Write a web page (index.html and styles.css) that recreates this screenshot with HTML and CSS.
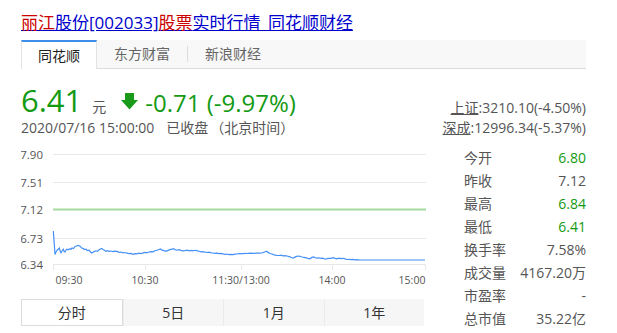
FILE: index.html
```html
<!DOCTYPE html>
<html>

<head>
  <title>丽江股份[002033]股票实时行情_同花顺财经</title>
  <link rel="stylesheet" href="styles.css">
</head>

<body>
  <div class="page">
    <h3 class="title">
      <a href="#"><em>丽江</em>股份[002033]<em>股票</em>实时行情_同花顺财经</a>
    </h3>

    <div class="tabs">
      <span class="tab active">同花顺</span>
      <span class="tab">东方财富</span>
      <span class="tab sep">新浪财经</span>
    </div>

    <div class="quote">
      <div class="price-block">
        <div class="price-line">
          <span class="price">6.41</span>
          <span class="unit">元</span>
          <svg class="arrow" width="17" height="17" viewBox="0 0 17 17">
            <path d="M4 0H13V7H17L8.5 16.5L0 7H4Z" fill="#1a9a1a" />
          </svg>
          <span class="change">-0.71 (-9.97%)</span>
        </div>
        <div class="time">2020/07/16 15:00:00<span class="status">已收盘</span>（北京时间）</div>
      </div>
      <div class="index">
        <div><a href="#">上证</a>:3210.10(-4.50%)</div>
        <div><a href="#">深成</a>:12996.34(-5.37%)</div>
      </div>
    </div>

    <div class="main">
      <div class="chart-wrap">
        <svg class="chart" width="410" height="150" viewBox="21 140 410 150">
          <g class="grid">
            <line x1="53" y1="152.5" x2="426" y2="152.5" />
            <line x1="53" y1="180.5" x2="426" y2="180.5" />
            <line x1="53" y1="236.5" x2="426" y2="236.5" />
            <line x1="53" y1="262.5" x2="426" y2="262.5" />
            <line x1="53.5" y1="262" x2="53.5" y2="268" />
            <line x1="145.5" y1="262" x2="145.5" y2="268" />
            <line x1="241.5" y1="262" x2="241.5" y2="268" />
            <line x1="332.5" y1="262" x2="332.5" y2="268" />
            <line x1="425.5" y1="262" x2="425.5" y2="268" />
          </g>
          <line class="base" x1="53" y1="207.5" x2="426" y2="207.5" />
          <g class="ylabels">
            <text x="43" y="156.5">7.90</text>
            <text x="43" y="184.5">7.51</text>
            <text x="43" y="211.5">7.12</text>
            <text x="43" y="240.5">6.73</text>
            <text x="43" y="266.5">6.34</text>
          </g>
          <g class="xlabels">
            <text x="69" y="282">09:30</text>
            <text x="145" y="282">10:30</text>
            <text x="241" y="282">11:30/13:00</text>
            <text x="332" y="282">14:00</text>
            <text x="412" y="282">15:00</text>
          </g>
          <path class="line" d="M53.3,229 L54.5,245 L55,252.5 L56,250 L57.3,248 L58.5,247 L59.3,246 L60.2,249 L61,250.7 L62,249 L63.3,247.3 L64.2,249.5 L65,250 L66,248 L66.7,247.3 L68,247.8 L69.5,246.8 L71,247.2 L72,246 L73.5,246.5 L75,244.5 L76.5,244 L78.3,243.5 L80,244.2 L81.7,246 L83,246.4 L84.5,247.5 L86,247.2 L87.5,248.6 L89,248.2 L90.5,250 L91.7,251 L93,250.2 L94.5,249.4 L96,248.8 L97.5,249.3 L99,247.8 L100.5,247 L101.7,246.5 L103,247.4 L104.5,248.3 L106,249.3 L107.5,248.6 L109,249.4 L111,249 L113,249.6 L115,249.1 L117,249.4 L119,250.4 L121,250 L123,250.8 L125,250.5 L127,251.2 L129,251.6 L131,251.4 L133,252.3 L135,251.6 L137,251.9 L139,251.2 L141,251.7 L143,250.9 L145,250.4 L147,250.8 L149,250 L151,249.6 L153,249.9 L155,248.8 L157,248.2 L159,247.5 L160.5,247 L162,248.2 L164,248.7 L166,249.3 L168,248.4 L170,247.6 L172,247.2 L173.5,246.6 L175,247.6 L177,248.2 L179,247.6 L181,248.4 L183,248.9 L185,248.6 L187,248.2 L189,248.8 L191,248.4 L193,248.9 L195,248.3 L197,248.6 L199,249.2 L201,249.8 L203,249.6 L205,250.2 L207,250.5 L209,250.2 L211,250.9 L213,251 L215,251.4 L217,251.2 L219,251.7 L221,251.4 L223,251.9 L225,252.3 L227,252 L229,252.6 L231,252.4 L233,252.7 L235,252.2 L237,252 L239,251.7 L241,251.7 L243,251.6 L245,251.4 L247,251.5 L250,251.2 L253,251.4 L256,251.1 L259,251.2 L262,251 L264,250.2 L266.7,249.3 L268,250.4 L270,251.5 L272,252 L274,252.8 L276.7,253.3 L279,253.5 L281,253.2 L283,253.8 L285,253.6 L287,254 L289,254.6 L291,255.3 L293,256.2 L294.5,255.4 L296,254.6 L298,254 L300,254.3 L302,255 L304,255.4 L306,255.8 L308,256.4 L310,256.8 L311.5,255.6 L313.3,255 L315,255.6 L317,256.2 L319,255.8 L321,256.4 L323,256.2 L325,257.2 L327,256.6 L329,256.3 L331,256.4 L333.3,255.7 L335,256.4 L337,256.8 L339,256.2 L341,256.6 L343,256.3 L345,256.9 L346.7,257.5 L349,257.3 L351,257.6 L353,257.3 L355,257.8 L357,257.6 L360,258 L425,258" />
        </svg>

        <div class="periods">
          <span class="period active">分时</span>
          <span class="period">5日</span>
          <span class="period">1月</span>
          <span class="period">1年</span>
        </div>
      </div>

      <div class="stats">
        <div class="row"><span>今开</span><span class="down">6.80</span></div>
        <div class="row"><span>昨收</span><span>7.12</span></div>
        <div class="row"><span>最高</span><span class="down">6.84</span></div>
        <div class="row"><span>最低</span><span class="down">6.41</span></div>
        <div class="row"><span>换手率</span><span>7.58%</span></div>
        <div class="row"><span>成交量</span><span>4167.20万</span></div>
        <div class="row"><span>市盈率</span><span>-</span></div>
        <div class="row"><span>总市值</span><span>35.22亿</span></div>
      </div>
    </div>
  </div>
</body>

</html>
```

FILE: styles.css
```css
body {
  margin: 0;
  background: white;
  font-family: "Open Sans", "Noto Sans CJK SC", sans-serif;
  color: #555;
}

.page {
  width: 565px;
  padding: 12px 0 0 21px;
}

/* Title link */
.title {
  margin: 0;
  font-size: 17px;
  font-weight: normal;
  line-height: 22px;
}

.title a {
  color: #0000cc;
}

.title em {
  font-style: normal;
  color: #cc0000;
}

/* Source tabs */
.tabs {
  display: flex;
  align-items: center;
  height: 28px;
  margin-top: 6px;
  background: #f8f8f8;
  border-bottom: 1px solid #dcdcdc;
}

.tab {
  padding: 0 17px;
  font-size: 14px;
  line-height: 16px;
  color: #666;
}

.tab.sep {
  border-left: 1px solid #ddd;
}

.tab.active {
  align-self: stretch;
  display: flex;
  align-items: center;
  background: white;
  color: #222;
  border-top: 2px solid #3d8fe8;
  border-left: 1px solid #e3e3e3;
  border-right: 1px solid #e3e3e3;
  margin-bottom: -1px;
  padding: 0 16px;
}

/* Price */
.quote {
  display: flex;
  justify-content: space-between;
  align-items: flex-end;
  margin-top: 14px;
}

.price-line {
  display: flex;
  align-items: baseline;
  height: 34px;
  color: #149a14;
}

.price {
  font-size: 31px;
  line-height: 34px;
}

.unit {
  font-size: 14px;
  color: #555;
  margin-left: 10px;
}

.arrow {
  margin-left: 15px;
  align-self: center;
  margin-top: 2px;
}

.change {
  font-size: 24px;
  margin-left: 7px;
}

.time {
  font-size: 14px;
  line-height: 18px;
  margin-top: 2px;
}

.status {
  margin-left: 12px;
  margin-right: 2px;
}

.index {
  font-size: 14px;
  line-height: 20px;
  text-align: right;
  margin-bottom: -1px;
}

.index a {
  color: #555;
}

/* Chart */
.main {
  display: flex;
  justify-content: space-between;
  margin-top: 5px;
}

.chart {
  display: block;
}

.grid line {
  stroke: #e8e8e8;
  stroke-width: 1;
}

.base {
  stroke: #a6d9a0;
  stroke-width: 2;
}

.line {
  fill: none;
  stroke: #4590f5;
  stroke-width: 1.2;
}

.ylabels text {
  font-size: 11.5px;
  fill: #555;
  text-anchor: end;
}

.xlabels text {
  font-size: 10.5px;
  fill: #555;
  text-anchor: middle;
}

.periods {
  display: flex;
  width: 403px;
  margin-top: 7px;
  background: #f6f6f6;
}

.period {
  flex: 1;
  height: 27px;
  line-height: 27px;
  text-align: center;
  font-size: 14px;
  color: #333;
  border-left: 1px solid #ebebeb;
}

.period.active {
  background: white;
  border: 1px solid #dcdcdc;
  height: 25px;
  line-height: 25px;
}

/* Stats list */
.stats {
  width: 122px;
  margin-top: 4px;
}

.row {
  display: flex;
  justify-content: space-between;
  height: 23px;
  line-height: 23px;
  font-size: 14px;
}

.down {
  color: #149a14;
}
```
